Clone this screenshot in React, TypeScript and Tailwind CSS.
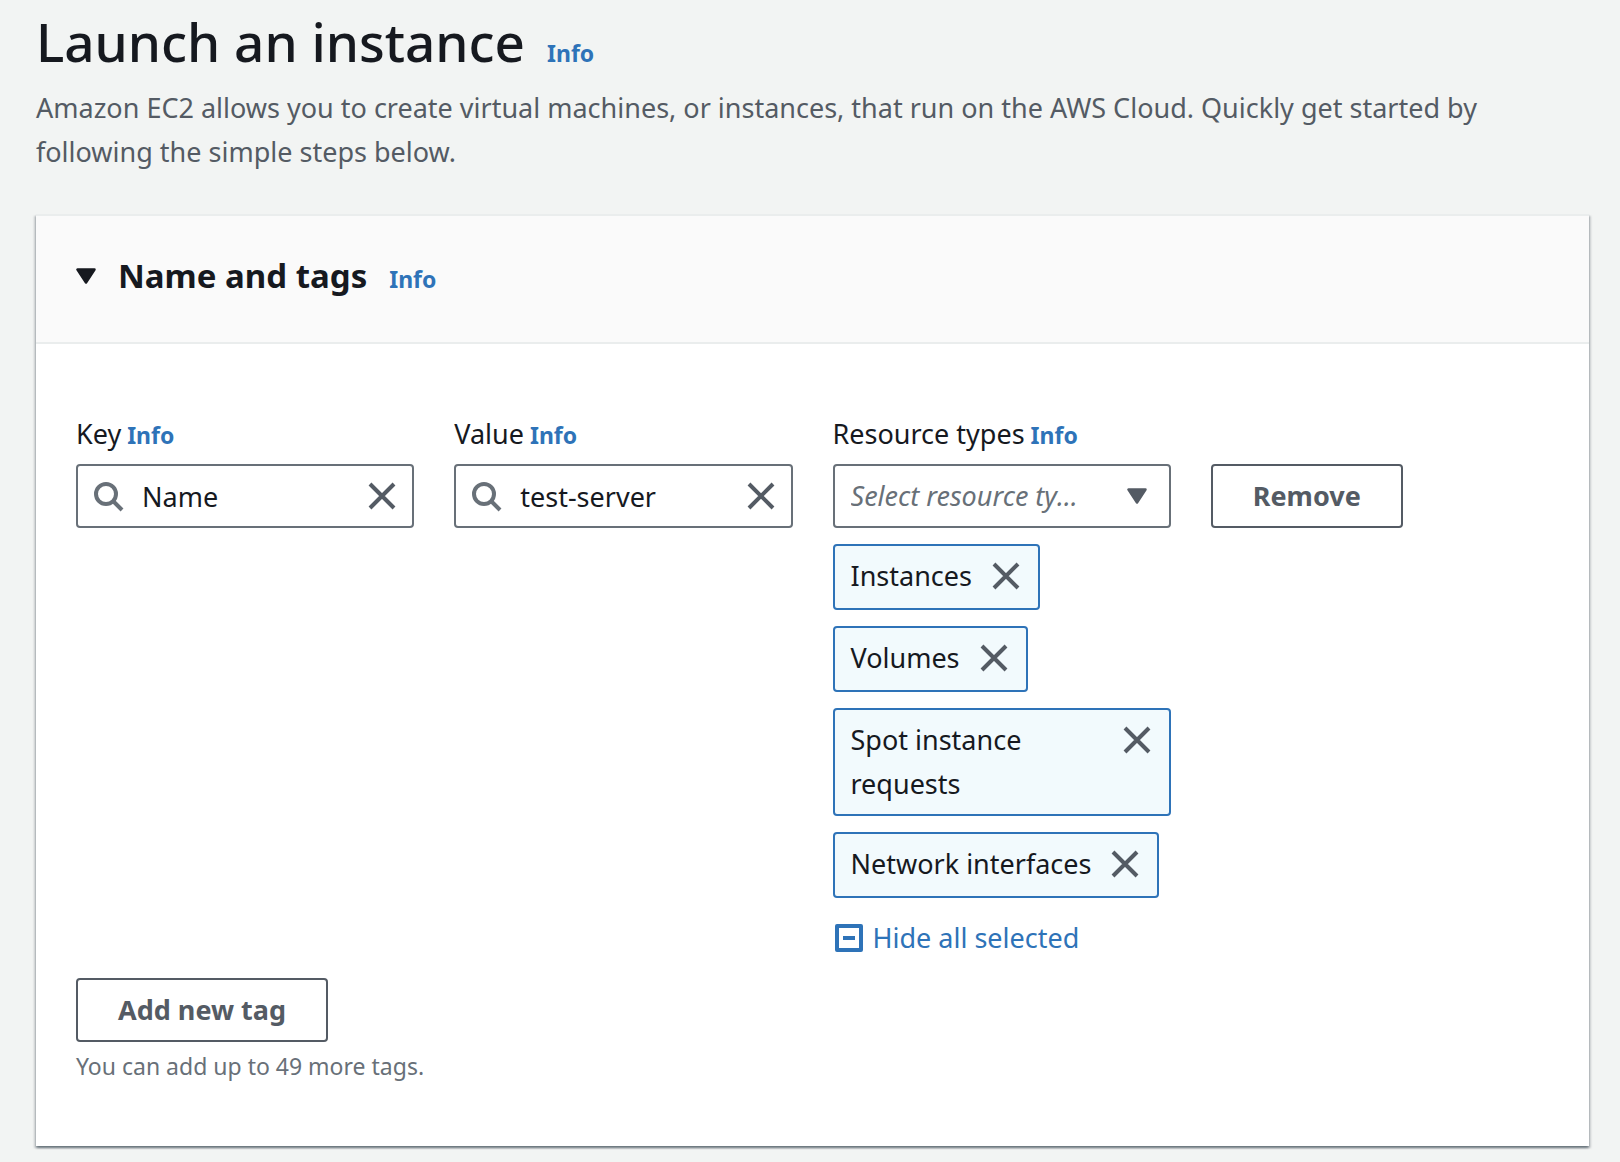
import { useState } from "react";
import type { ReactNode } from "react";

function InfoLink({ topic }: { topic: string }) {
  return (
    <a
      href="#info"
      aria-label={`Info about ${topic}`}
      className="text-[23px] font-bold text-[#2e73b8] hover:underline"
    >
      Info
    </a>
  );
}

function CaretDown({ className }: { className: string }) {
  return (
    <svg viewBox="0 0 20 16" aria-hidden="true" className={className}>
      <path
        d="M1.5 1.5h17L10 14.5z"
        fill="currentColor"
        stroke="currentColor"
        strokeWidth="2.5"
        strokeLinejoin="round"
      />
    </svg>
  );
}

function CloseIcon() {
  return (
    <svg viewBox="0 0 28 28" aria-hidden="true" className="size-7">
      <path d="M2 2l24 24M26 2L2 26" fill="none" stroke="currentColor" strokeWidth="4" />
    </svg>
  );
}

function SearchIcon() {
  return (
    <svg viewBox="0 0 32 32" aria-hidden="true" className="size-8 shrink-0 text-[#687078]">
      <circle cx="14" cy="14" r="10" fill="none" stroke="currentColor" strokeWidth="4" />
      <path d="M21 21l9 9" fill="none" stroke="currentColor" strokeWidth="4" />
    </svg>
  );
}

function FieldLabel({ id, text }: { id: string; text: string }) {
  return (
    <div className="flex h-11 items-baseline gap-1.5 leading-11">
      <label htmlFor={id}>{text}</label>
      <InfoLink topic={text} />
    </div>
  );
}

function SearchField({ id, label, initial }: { id: string; label: string; initial: string }) {
  const [value, setValue] = useState(initial);
  return (
    <div className="flex min-w-0 flex-col gap-2">
      <FieldLabel id={id} text={label} />
      <div className="flex h-16 items-center gap-[18px] rounded border-2 border-[#687078] bg-white pr-4 pl-3.5">
        <SearchIcon />
        <input
          id={id}
          type="text"
          value={value}
          onChange={(e) => setValue(e.target.value)}
          className="w-full min-w-0 bg-transparent pt-0.5 outline-none"
        />
        <button type="button" aria-label={`Clear ${label}`} onClick={() => setValue("")} className="shrink-0 text-[#545b64]">
          <CloseIcon />
        </button>
      </div>
    </div>
  );
}

function Chip({ children, onRemove }: { children: ReactNode; onRemove: () => void }) {
  return (
    <li className="flex min-h-[66px] max-w-full items-start justify-between gap-5 rounded border-2 border-[#2e73b8] bg-[#f2fafd] py-2 pr-[18px] pl-4 leading-11">
      <span>{children}</span>
      <button type="button" aria-label={`Remove ${children}`} onClick={onRemove} className="flex h-11 shrink-0 items-center text-[#545b64]">
        <CloseIcon />
      </button>
    </li>
  );
}

function OutlineButton({ children }: { children: ReactNode }) {
  return (
    <button
      type="button"
      className="block h-16 rounded border-2 border-[#545b64] bg-white px-10 font-bold text-[#545b64] hover:bg-[#fafafa]"
    >
      {children}
    </button>
  );
}

export default function App() {
  const [types, setTypes] = useState([
    "Instances",
    "Volumes",
    "Spot instance requests",
    "Network interfaces",
  ]);
  const [showTypes, setShowTypes] = useState(true);

  return (
    <main className="min-h-screen bg-[#f2f4f3] pt-1 pr-[31px] pb-4 pl-9 font-['Noto_Sans','Open_Sans',sans-serif] text-[27px] text-[#16191f]">
      <header className="mb-10">
        <div className="mb-1.5 flex h-19 items-baseline gap-[22px]">
          <h1 className="text-[53px] leading-19 font-medium">Launch an instance</h1>
          <InfoLink topic="launching an instance" />
        </div>
        <p className="leading-11 text-[#545b64]">
          Amazon EC2 allows you to create virtual machines, or instances, that run on the AWS Cloud.
          Quickly get started by following the simple steps below.
        </p>
      </header>

      <section className="border-t-2 border-[#eaeded] bg-white shadow-[0_2px_2px_0_rgba(0,20,36,0.4),2px_2px_2px_0_rgba(0,20,36,0.15),-2px_2px_2px_0_rgba(0,20,36,0.15)]">
        <div className="flex h-32 items-center gap-[22px] border-b-2 border-[#eaeded] bg-[#fafafa] px-10 pb-1.5">
          <button type="button" aria-label="Collapse Name and tags" className="text-[#16191f]">
            <CaretDown className="h-4 w-5" />
          </button>
          <div className="flex h-11 items-baseline gap-[22px] leading-11">
            <h2 className="text-[33px] font-bold">Name and tags</h2>
            <InfoLink topic="name and tags" />
          </div>
        </div>

        <div className="px-10 pt-17 pb-16">
          <div className="grid grid-cols-4 gap-10">
            <SearchField id="tag-key" label="Key" initial="Name" />
            <SearchField id="tag-value" label="Value" initial="test-server" />

            <div className="flex min-w-0 flex-col gap-2">
              <FieldLabel id="resource-types" text="Resource types" />
              <div className="grid items-center">
                <select
                  id="resource-types"
                  className="col-start-1 row-start-1 h-16 w-full appearance-none truncate rounded border-2 border-[#687078] bg-white pr-20 pl-4 text-[#687078] italic"
                >
                  <option>Select resource types</option>
                </select>
                <CaretDown className="pointer-events-none col-start-1 row-start-1 mr-6 h-4 w-5 justify-self-end text-[#545b64]" />
              </div>
              {showTypes && (
                <ul className="mt-2 flex flex-col items-start gap-4">
                  {types.map((type) => (
                    <Chip key={type} onRemove={() => setTypes(types.filter((t) => t !== type))}>
                      {type}
                    </Chip>
                  ))}
                </ul>
              )}
              <button
                type="button"
                onClick={() => setShowTypes(!showTypes)}
                className="mt-2.5 flex items-center gap-2 self-start leading-11 text-[#2e73b8]"
              >
                <svg viewBox="0 0 32 32" aria-hidden="true" className="size-8">
                  <rect x="4" y="4" width="24" height="24" fill="none" stroke="currentColor" strokeWidth="4" strokeLinejoin="round" />
                  <path d="M10 16h12" stroke="currentColor" strokeWidth="4" />
                </svg>
                {showTypes ? "Hide all selected" : "Show all selected"}
              </button>
            </div>

            <div className="pt-13">
              <OutlineButton>Remove</OutlineButton>
            </div>
          </div>

          <div className="mt-[18px]">
            <OutlineButton>Add new tag</OutlineButton>
            <p className="mt-2 text-[23px] leading-8 text-[#687078]">You can add up to 49 more tags.</p>
          </div>
        </div>
      </section>
    </main>
  );
}
